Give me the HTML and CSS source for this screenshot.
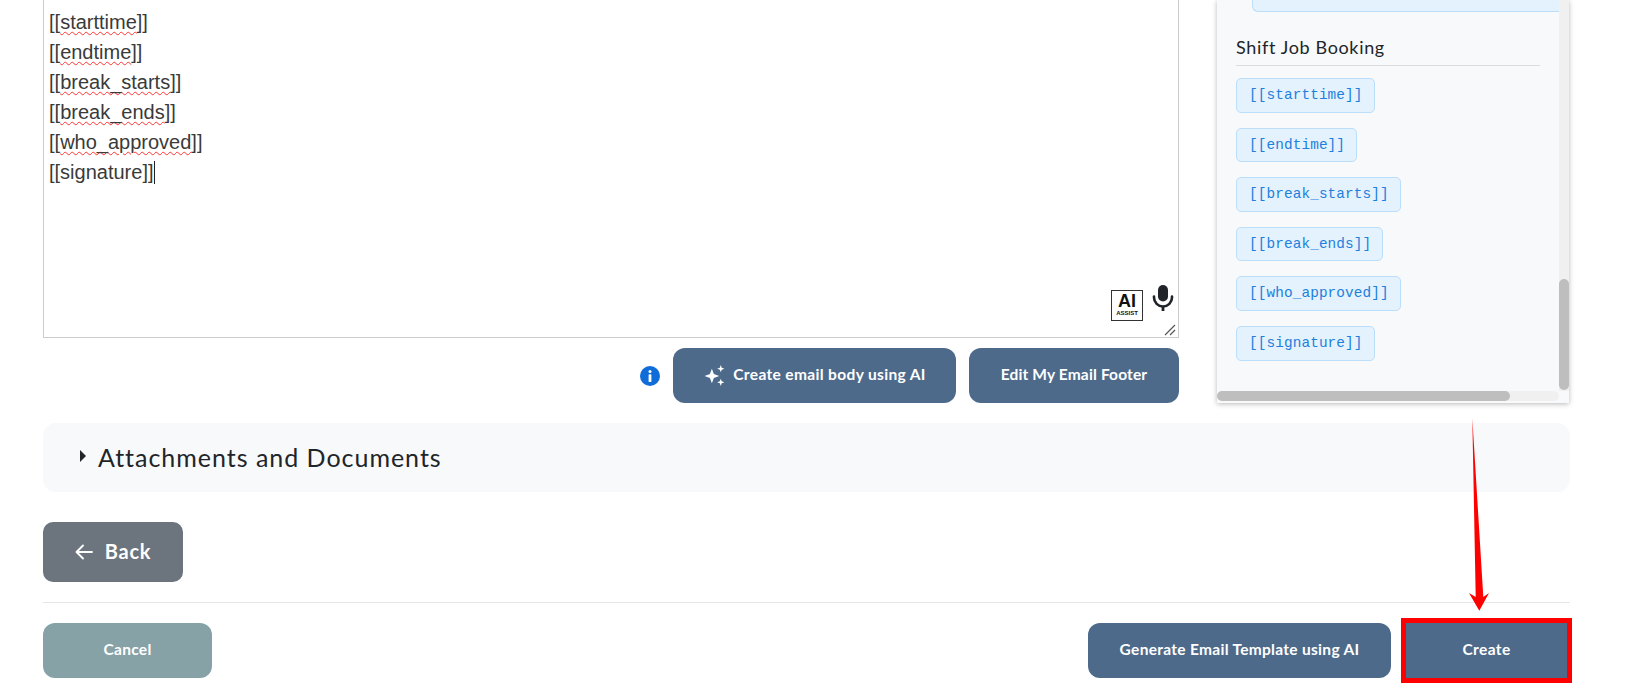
FILE: index.html
```html
<!DOCTYPE html>
<html lang="en">
<head>
<meta charset="utf-8">
<title>Email template</title>
<link rel="stylesheet" href="styles.css">
</head>
<body>
<div class="page">
  <div class="compose">
    <div class="left">
      <div class="editor">
        <div class="line">[[<span class="sp">starttime</span>]]</div>
        <div class="line">[[<span class="sp">endtime</span>]]</div>
        <div class="line">[[<span class="sp">break_starts</span>]]</div>
        <div class="line">[[<span class="sp">break_ends</span>]]</div>
        <div class="line">[[<span class="sp">who_approved</span>]]</div>
        <div class="line">[[signature]]<span class="caret"></span></div>
        <div class="ai-badge"><span class="ai-big">AI</span><span class="ai-small">ASSIST</span></div>
        <svg class="mic" viewBox="0 0 24 28" width="24" height="28"><rect x="7" y="1" width="10" height="16.500" rx="5" fill="#212529"/><path d="M3 12.500v1a9 9 0 0 0 18 0v-1" fill="none" stroke="#212529" stroke-width="2.600" stroke-linecap="round"/><path d="M12 22.500V27" stroke="#212529" stroke-width="2.800"/></svg>
        <svg class="grip" viewBox="0 0 12 12" width="12" height="12"><path d="M1 11L11 1M6 11L11 6" stroke="#555" stroke-width="1.200" fill="none"/></svg>
      </div>
      <div class="editor-actions">
        <svg class="info" viewBox="0 0 20 20" width="20" height="20"><circle cx="10" cy="10" r="10" fill="#0f6cd9"/><circle cx="10" cy="5.600" r="1.500" fill="#fff"/><rect x="8.600" y="8.300" width="2.800" height="7.600" rx=".6" fill="#fff"/></svg>
        <button class="btn btn-ai"><svg class="spark" viewBox="0 0 22 22" width="23" height="23"><path d="M8.500 4.500l1.900 5.100 5.100 1.900-5.100 1.900-1.900 5.100-1.900-5.100-5.100-1.900 5.100-1.900z" fill="#fff"/><path d="M17 1l.9 2.600 2.600.9-2.600.9-.9 2.600-.9-2.600-2.600-.9 2.600-.9zM17 14l.9 2.600 2.600.9-2.600.9-.9 2.600-.9-2.600-2.600-.9 2.600-.9z" fill="#fff"/></svg>Create email body using AI</button>
        <button class="btn btn-footer">Edit My Email Footer</button>
      </div>
    </div>
    <aside class="panel">
      <div class="panel-body">
        <div class="chip-cut"></div>
        <h3 class="panel-title">Shift Job Booking</h3>
        <code class="chip">[[starttime]]</code>
        <code class="chip">[[endtime]]</code>
        <code class="chip">[[break_starts]]</code>
        <code class="chip">[[break_ends]]</code>
        <code class="chip">[[who_approved]]</code>
        <code class="chip">[[signature]]</code>
      </div>
      <div class="track-v"><div class="thumb-v"></div></div>
      <div class="track-h"><div class="thumb-h"></div></div>
    </aside>
  </div>
  <div class="accordion"><span class="tri"></span><span class="acc-title">Attachments and Documents</span></div>
  <button class="btn btn-back"><svg viewBox="0 0 18 16" width="18" height="16"><path d="M17 8H2M8 1.500L1.500 8 8 14.500" fill="none" stroke="#fff" stroke-width="1.900" stroke-linecap="round" stroke-linejoin="round"/></svg><span>Back</span></button>
  <div class="footer">
    <button class="btn btn-cancel">Cancel</button>
    <div class="footer-right">
      <button class="btn btn-generate">Generate Email Template using AI</button>
      <button class="btn btn-create">Create</button>
    </div>
  </div>
  <svg class="arrow" viewBox="0 0 40 200" width="40" height="200"><path d="M12.300 2L15.700 181 9 177 19.300 194.700 29 177 23.300 181z" fill="#f00"/></svg>
</div>
</body>
</html>
```

FILE: styles.css
```css
* { box-sizing: border-box; }
html, body { margin: 0; height: 100%; overflow: hidden; background: #fff; }
body { font-family: Lato, "Noto Sans", sans-serif; color: #212529; }
.page { position: relative; width: 1627px; height: 690px; padding: 0 57px 0 43px; }
.compose { display: grid; grid-template-columns: 1136px 352px; gap: 38px; height: 401px; }
.left { display: flex; flex-direction: column; }
.editor {
  position: relative; height: 338px; padding: 7px 0 0 5px;
  border-left: 1px solid #ccc; border-right: 1px solid #ccc; border-bottom: 1px solid #ccc;
  font-family: "Liberation Sans", Arial, sans-serif; font-size: 20px; line-height: 30px; color: #3a3a3a;
}
.sp { text-decoration: underline wavy #f33 1.300px; text-underline-offset: 2px; }
.caret { display: inline-block; width: 1px; height: 23px; background: #222; vertical-align: -5px; }
.ai-badge {
  position: absolute; left: 1067px; top: 290px; width: 32px; height: 31px;
  border: 1px solid #333; background: #fff; display: flex; flex-direction: column; align-items: center;
  font-family: "Liberation Sans", Arial, sans-serif; font-weight: 700; color: #111;
}
.ai-big { font-size: 18px; line-height: 18px; margin-top: 1px; }
.ai-small { font-size: 6px; line-height: 7px; }
.mic { position: absolute; left: 1107px; top: 284px; }
.grip { position: absolute; right: 2px; bottom: 1px; }
.editor-actions { display: flex; justify-content: flex-end; align-items: center; gap: 13px; margin-top: 10px; }
.btn {
  border: 0; color: #fff; font-family: Lato, "Noto Sans", sans-serif; font-weight: 700; font-size: 15.500px;
  border-radius: 12px; height: 55px; background: #4d6a8b; display: inline-flex; align-items: center; justify-content: center; padding: 0 0 3px;
}
.btn-ai { width: 283px; gap: 7px; letter-spacing: .35px; }
.btn-ai .spark { margin-top: 2px; }
.btn-footer { width: 210px; letter-spacing: .15px; }
.panel {
  display: grid; grid-template-columns: 342px 10px; grid-template-rows: 391px 10px;
  background: #f8f9fa; box-shadow: 0 1px 5px rgba(0,0,0,.28); overflow: hidden;
}
.panel-body { padding: 0 0 0 19px; overflow: hidden; }
.chip-cut {
  height: 12px; margin: 0 0 0 16px; background: #e3f2fd;
  border: 1px solid #bbdefb; border-top: 0; border-right: 0; border-radius: 0 0 0 6px;
}
.panel-title { margin: 24px 19px 0 0; padding-bottom: 8px; border-bottom: 1px solid #dcdde0; font-size: 18px; font-weight: 400; line-height: 22px; letter-spacing: .65px; color: #212529; height: 30px; }
.chip {
  display: block; width: fit-content; margin: 0 0 15px; padding: 8px 11px 8px 12px;
  font-family: "Liberation Mono", "Courier New", monospace; font-size: 14.400px; line-height: 16.600px; letter-spacing: .1px;
  color: #1e7fdc; background: #e3f2fd; border: 1px solid #bbdefb; border-radius: 5px;
}
.panel-title + .chip { margin-top: 12px; }
.track-v { background: #f0f0f0; grid-row: 1 / 2; grid-column: 2; }
.thumb-v { margin-top: 279px; height: 111px; background: #bebebe; border-radius: 5px; }
.track-h { background: #f0f0f0; grid-column: 1; grid-row: 2; border-radius: 5px; }
.thumb-h { width: 293px; height: 10px; background: #bebebe; border-radius: 5px; }
.accordion {
  display: flex; align-items: center; height: 69px; margin-top: 22px; padding: 0 0 2px 37px;
  background: #f8f9fa; border-radius: 13px;
}
.tri { width: 0; height: 0; border-left: 6px solid #212529; border-top: 6px solid transparent; border-bottom: 6px solid transparent; margin-right: 12px; margin-top: -2px; }
.acc-title { font-size: 25px; letter-spacing: .98px; font-weight: 400; }
.btn-back { width: 140px; height: 60px; margin-top: 30px; background: #6c757d; border-radius: 10px; font-size: 20px; gap: 12px; display: flex; font-weight: 700; padding-right: 0; }
.btn-back svg { margin-top: 2px; }
.btn-back span { letter-spacing: .8px; }
.footer { display: flex; justify-content: space-between; margin-top: 20px; padding-top: 20px; border-top: 1px solid #e5e5e5; }
.footer-right { display: flex; gap: 15px; margin-right: 3px; }
.btn-cancel { width: 169px; background: #86a2a7; letter-spacing: .3px; }
.btn-generate { width: 303px; letter-spacing: .3px; }
.btn-create { width: 161px; border-radius: 0; outline: 5px solid #f00; letter-spacing: .4px; }
.arrow { position: absolute; left: 1460px; top: 416px; }
```
